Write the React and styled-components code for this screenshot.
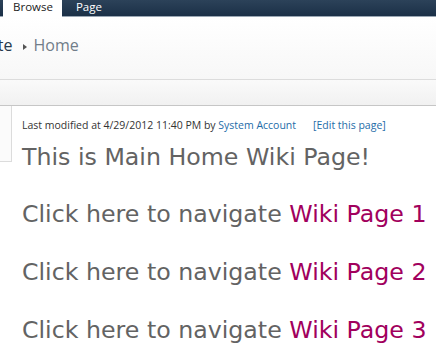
import React from 'react';
import styled, { createGlobalStyle } from 'styled-components';

const GlobalStyle = createGlobalStyle`
  html, body {
    margin: 0;
    padding: 0;
    background: #fff;
    overflow: hidden;
  }
`;

const Page = styled.div`
  width: 436px;
  height: 345px;
  overflow: hidden;
  font-family: 'Open Sans', 'Noto Sans', sans-serif;
`;

const Ribbon = styled.div`
  height: 16px;
  background: linear-gradient(#2c4259, #1b3047);
  display: flex;
  padding-left: 3px;
  border-bottom: 1px solid #9aa7b4;
`;

const Tab = styled.a`
  display: block;
  height: ${p => (p.$active ? '17px' : '16px')};
  padding: 0 ${p => (p.$active ? '9px' : '0')} 0 10px;
  margin-right: 4px;
  font-family: 'Open Sans', sans-serif;
  font-size: 11.5px;
  line-height: 13px;
  color: ${p => (p.$active ? '#222' : '#fff')};
  background: ${p => (p.$active ? '#fff' : 'transparent')};
  text-decoration: none;
  overflow: hidden;
`;

const TitleArea = styled.div`
  height: 63px;
  background: linear-gradient(#ffffff, #f7f7f7);
  border-bottom: 1px solid #dcdcdc;
  display: flex;
  align-items: center;
  padding-bottom: 6px;
  box-sizing: border-box;
`;

const Crumb = styled.span`
  font-family: 'Open Sans', sans-serif;
  font-size: 16px;
  color: ${p => (p.$current ? '#717d89' : '#26394d')};
`;

const SiteCrumb = styled(Crumb)`
  margin-left: -15px;
`;

const Arrow = styled.span`
  display: inline-block;
  width: 0;
  height: 0;
  margin: 3px 7px 0 10px;
  border-top: 3px solid transparent;
  border-bottom: 3px solid transparent;
  border-left: 4px solid #555;
`;

const Strip = styled.div`
  height: 25px;
  background: linear-gradient(#fafafa, #f1f1f1);
  border-bottom: 1px solid #c6c6c6;
`;

const Body = styled.div`
  display: flex;
  align-items: flex-start;
`;

const LeftNav = styled.div`
  width: 11px;
  height: 55px;
  flex-shrink: 0;
  background: #fbfbfb;
  border-right: 1px solid #dcdcdc;
  border-bottom: 1px solid #dcdcdc;
`;

const Content = styled.div`
  padding: 12px 0 0 10px;
  white-space: nowrap;
`;

const Meta = styled.div`
  font-family: 'Open Sans', sans-serif;
  font-size: 10.5px;
  line-height: 14px;
  color: #333;
`;

const MetaLink = styled.a`
  color: #1e6ca8;
  text-decoration: none;
  margin-left: ${p => p.$gap || '0'};
`;

const WikiText = styled.p`
  margin: 0;
  font-family: 'DejaVu Sans', Verdana, sans-serif;
  font-size: 23.7px;
  line-height: 28px;
  color: #636363;
  margin-top: ${p => p.$top || '0'};
`;

const WikiLink = styled.a`
  color: #a1005d;
  text-decoration: none;
`;

export default function App() {
  return (
    <Page>
      <GlobalStyle />
      <Ribbon>
        <Tab $active href="#">Browse</Tab>
        <Tab href="#">Page</Tab>
      </Ribbon>
      <TitleArea>
        <SiteCrumb>Site</SiteCrumb>
        <Arrow />
        <Crumb $current>Home</Crumb>
      </TitleArea>
      <Strip />
      <Body>
        <LeftNav />
        <Content>
          <Meta>
            Last modified at 4/29/2012 11:40 PM by <MetaLink href="#">System Account</MetaLink>
            <MetaLink href="#" $gap="17px">[Edit this page]</MetaLink>
          </Meta>
          <WikiText $top="11px">This is Main Home Wiki Page!</WikiText>
          {[1, 2, 3].map(n => (
            <WikiText key={n} $top={n === 1 ? '29px' : '30px'}>
              Click here to navigate <WikiLink href="#">Wiki Page {n}</WikiLink>
            </WikiText>
          ))}
        </Content>
      </Body>
    </Page>
  );
}
